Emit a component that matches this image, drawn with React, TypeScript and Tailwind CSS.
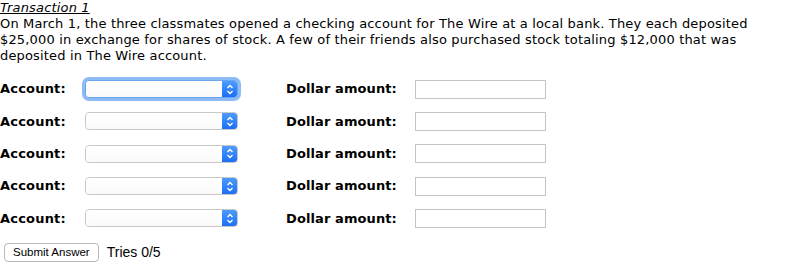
import React from "react";

const verdana = { fontFamily: '"DejaVu Sans", Verdana, sans-serif' };

function FakeSelect({ focused = false }: { focused?: boolean }) {
  return (
    <div
      className={
        "relative flex h-[18px] w-[153px] items-stretch rounded-[4px] border bg-white " +
        (focused
          ? "border-[#6aa6f0] shadow-[0_0_0_3px_#8dbbf5]"
          : "border-[#c8c8c8]")
      }
    >
      <div className="flex-1 rounded-l-[4px] bg-gradient-to-b from-white to-[#fafafa]" />
      <div className="flex w-[15px] items-center justify-center rounded-r-[3px] bg-gradient-to-b from-[#4d9bfb] to-[#1b6ef6]">
        <svg width="8" height="11" viewBox="0 0 8 11" fill="none">
          <path d="M1.5 4 L4 1.5 L6.5 4" stroke="white" strokeWidth="1.4" />
          <path d="M1.5 7 L4 9.5 L6.5 7" stroke="white" strokeWidth="1.4" />
        </svg>
      </div>
    </div>
  );
}

function Row({ focused = false }: { focused?: boolean }) {
  return (
    <div className="flex h-[32.3px] items-center">
      <div className="w-[85px] text-[13px] font-bold tracking-[0.2px] text-black">Account:</div>
      <FakeSelect focused={focused} />
      <div className="ml-[48px] w-[129px] text-[13px] font-bold tracking-[0.1px] text-black">Dollar amount:</div>
      <div className="h-[19px] w-[131px] border border-[#c4c4c4] bg-white" />
    </div>
  );
}

export default function App() {
  return (
    <div className="h-[270px] w-[799px] bg-white text-black" style={verdana}>
      <div className="text-[13px] leading-[16px] tracking-[0.16px]">
        <div className="italic underline">Transaction 1</div>
        <p className="whitespace-nowrap">
          On March 1, the three classmates opened a checking account for The Wire at a local bank. They each deposited
          <br />
          $25,000 in exchange for shares of stock. A few of their friends also purchased stock totaling $12,000 that was
          <br />
          deposited in The Wire account.
        </p>
      </div>
      <div className="mt-[9px]">
        <Row focused />
        <Row />
        <Row />
        <Row />
        <Row />
      </div>
      <div className="mt-[8px] flex items-center" style={{ fontFamily: '"Liberation Sans", Arial, sans-serif' }}>
        <button className="ml-[4px] h-[19px] rounded-[4px] border border-[#b9b9b9] bg-white px-[8px] text-[11.5px] leading-none text-black">
          Submit Answer
        </button>
        <span className="ml-[8px] text-[14px]">Tries 0/5</span>
      </div>
    </div>
  );
}
